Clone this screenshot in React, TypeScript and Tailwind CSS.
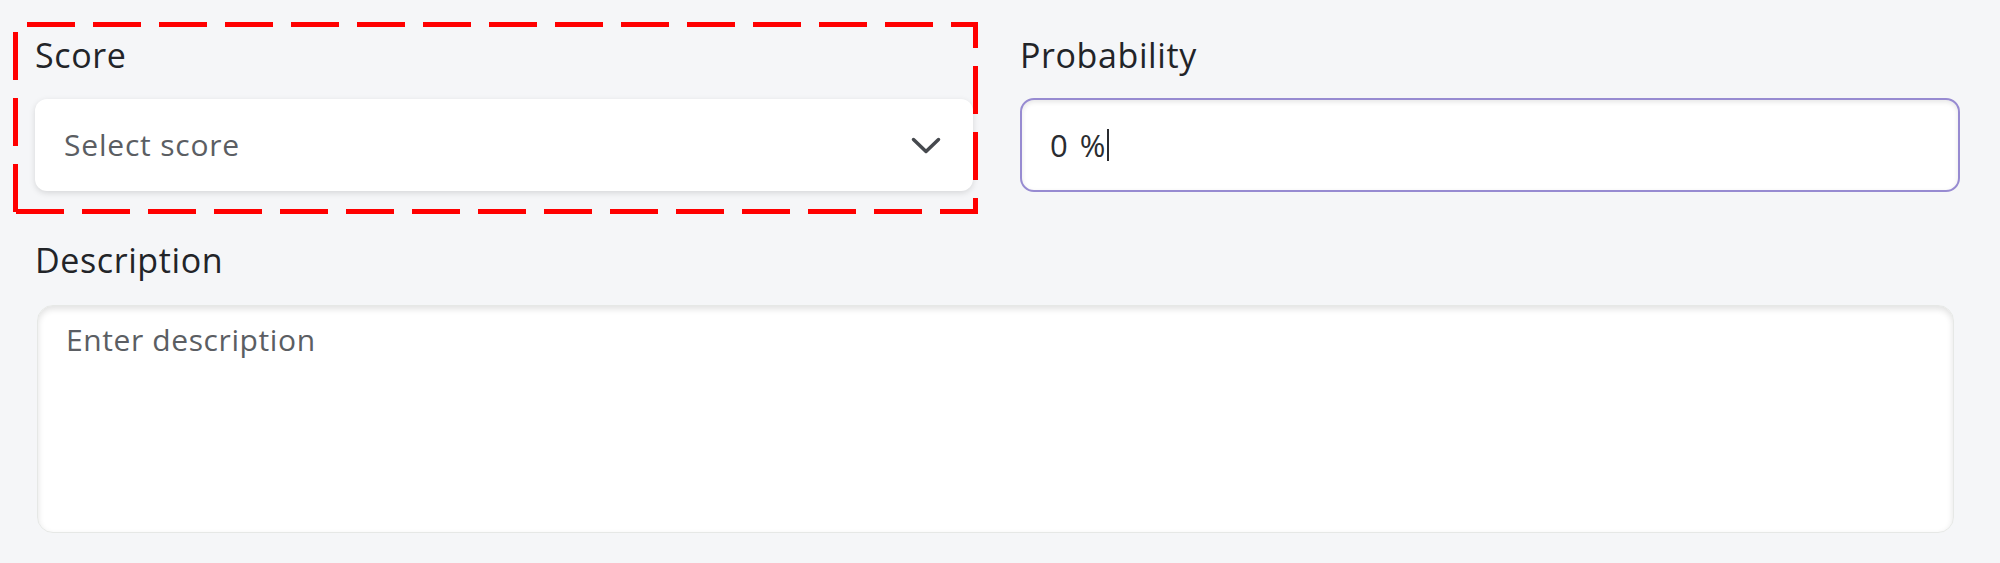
import React from "react";

const font = { fontFamily: "'Open Sans', 'Noto Sans', sans-serif" };

// dashed annotation box drawn over the Score field
const DashedFrame = () => (
  <svg
    className="pointer-events-none absolute left-0 top-0"
    width="1000"
    height="230"
    fill="none"
    stroke="#ff0000"
    strokeWidth="5"
    strokeDasharray="48 18"
  >
    <path d="M27 24.5H978" />
    <path d="M15.5 32V214" />
    <path d="M975.5 22V214" strokeDashoffset="22" />
    <path d="M16 211.5H978" />
  </svg>
);

const Label = ({ children }: { children: React.ReactNode }) => (
  <label className="block text-[34px] leading-none font-medium tracking-[0.6px] text-[#222428]">{children}</label>
);

export default function App() {
  return (
    <div className="relative min-h-[563px] w-full bg-[#f5f6f8] pl-[35px] pr-[40px] pt-[38px]" style={font}>
      <div className="grid grid-cols-2 gap-x-[45px]">
        {/* Score */}
        <div className="flex flex-col gap-[27px]">
          <Label>Score</Label>
          <button
            type="button"
            className="flex h-[92px] w-[938px] items-center justify-between rounded-[12px] bg-white pl-[29px] pr-[32px] shadow-[0_2px_6px_rgba(0,0,0,0.13)]"
          >
            <span className="text-[30px] leading-none tracking-[0.8px] text-[#5b5e63]">Select score</span>
            <svg width="30" height="17" viewBox="0 0 30 17" fill="none" stroke="#46494e" strokeWidth="3.5" strokeLinecap="round" strokeLinejoin="round">
              <polyline points="2.5,2.5 15,14.5 27.5,2.5" />
            </svg>
          </button>
        </div>

        {/* Probability */}
        <div className="flex flex-col gap-[26px]">
          <Label>Probability</Label>
          <div className="flex h-[94px] items-center rounded-[14px] border-2 border-[#978bd1] bg-white pl-[28px] shadow-[inset_0_2px_5px_rgba(0,0,0,0.1)]">
            <span className="text-[31px] leading-none tracking-[2px] text-[#2a2c30]">0 %</span>
            <span className="h-[32px] w-[1.5px] bg-[#2a2c30]" />
          </div>
        </div>
      </div>

      {/* Description */}
      <div className="mt-[51px] flex flex-col gap-[28px]">
        <Label>Description</Label>
        <textarea
          placeholder="Enter description"
          className="ml-[2px] mr-[6px] h-[228px] resize-none rounded-[16px] border border-[#e6e8e6] bg-white pl-[28px] pt-[19px] text-[30px] leading-none tracking-[0.6px] text-[#2a2c30] shadow-[inset_0_3px_6px_rgba(0,0,0,0.12)] outline-none placeholder:text-[#5b5e63]"
          style={font}
        />
      </div>

      <DashedFrame />
    </div>
  );
}
